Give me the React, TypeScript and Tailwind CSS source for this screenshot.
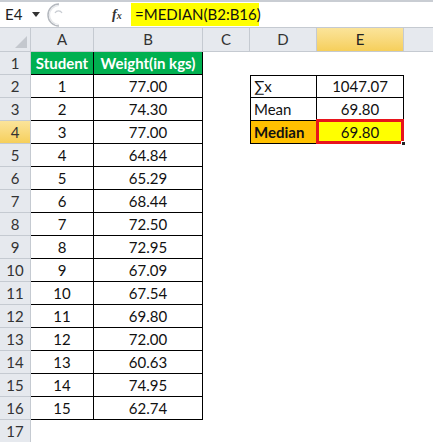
import React from "react";

const weights = ["77.00","74.30","77.00","64.84","65.29","68.44","72.50","72.95","67.09","67.54","69.80","72.00","60.63","74.95","62.74"];
const cols = ["A","B","C","D","E"];

function RowHeader({ n }: { n: number }) {
  const active = n === 4;
  return (
    <div className={`flex items-center justify-center border-b border-r border-[#c5cad1] text-[15px] text-[#333] ${active ? "bg-gradient-to-b from-[#fbe49a] to-[#f6cf5a]" : "bg-[#e6e9ee]"}`}>
      {n}
    </div>
  );
}

export default function App() {
  const rows: React.ReactNode[] = [];
  for (let r = 1; r <= 17; r++) {
    rows.push(<RowHeader key={`h${r}`} n={r} />);
    if (r === 1) {
      rows.push(<div key={`a${r}`} className="flex items-center justify-center bg-[#00b050] font-bold text-white border-r border-b border-black text-[15px]">Student</div>);
      rows.push(<div key={`b${r}`} className="flex items-center justify-center bg-[#00b050] font-bold text-white border-r border-b border-black text-[15px]">Weight(in kgs)</div>);
    } else if (r <= 16) {
      rows.push(<div key={`a${r}`} className="flex items-center justify-center border-r border-b border-black text-[15px] text-[#111]">{r - 1}</div>);
      rows.push(<div key={`b${r}`} className="flex items-center justify-center border-r border-b border-black text-[15px] text-[#111]">{weights[r - 2]}</div>);
    } else {
      rows.push(<div key={`a${r}`} />);
      rows.push(<div key={`b${r}`} />);
    }
    rows.push(<div key={`c${r}`} />);
    if (r === 2) {
      rows.push(<div key={`d${r}`} className="flex items-center pl-[3px] border border-black text-[15px] text-[#111]">∑x</div>);
      rows.push(<div key={`e${r}`} className="flex items-center justify-center border-t border-r border-b border-black text-[15px] text-[#111]">1047.07</div>);
    } else if (r === 3) {
      rows.push(<div key={`d${r}`} className="flex items-center pl-[3px] border-l border-r border-b border-black text-[15px] text-[#111]">Mean</div>);
      rows.push(<div key={`e${r}`} className="flex items-center justify-center border-r border-b border-black text-[15px] text-[#111]">69.80</div>);
    } else if (r === 4) {
      rows.push(<div key={`d${r}`} className="flex items-center pl-[3px] border-l border-r border-b border-black bg-[#ffc000] font-bold text-[15px] text-[#111]">Median</div>);
      rows.push(
        <div key={`e${r}`} className="relative flex items-center justify-center border-r border-b border-black bg-[#ffff00] text-[15px] text-[#111]">
          69.80
          <div className="absolute -left-[1px] -top-[2px] -right-[1px] -bottom-[1px] border-[3px] border-[#e8141c]" />
          <div className="absolute -right-[3px] -bottom-[3px] w-[5px] h-[5px] bg-[#222] border border-white" />
        </div>
      );
    } else {
      rows.push(<div key={`d${r}`} />);
      rows.push(<div key={`e${r}`} />);
    }
    rows.push(<div key={`f${r}`} />);
  }

  return (
    <div className="w-[433px] h-[442px] overflow-hidden bg-white" style={{ fontFamily: "Lato, 'Noto Sans', sans-serif" }}>
      <div className="h-[2px] bg-[#c9cdd3]" />
      <div className="h-[26px] flex items-center border-b border-[#c5cad1] bg-white">
        <div className="w-[30px] pl-[5px] text-[15px] text-[#222]">E4</div>
        <div className="w-[12px] flex items-center justify-center">
          <svg width="8" height="5" viewBox="0 0 8 5"><path d="M0 0 L8 0 L4 5 Z" fill="#333" /></svg>
        </div>
        <div className="ml-[3px] w-[20px] h-[24px] flex items-center">
          <svg width="20" height="24" viewBox="0 0 20 24">
            <path d="M14 1 A 11 11 0 0 0 14 23" fill="none" stroke="#b4b8be" strokeWidth="1.5" />
            <path d="M14 2.5 A 9.5 9.5 0 0 0 14 21.5" fill="none" stroke="#e4e6e9" strokeWidth="1.2" />
            <path d="M10 10 A 4 4 0 0 1 17 10" fill="none" stroke="#c8ccd2" strokeWidth="1.2" />
          </svg>
        </div>
        <div className="ml-[47px] w-[18px] text-[14px] italic font-bold text-[#333]" style={{ fontFamily: "'Liberation Serif', serif" }}>f<span className="text-[10px]">x</span></div>
        <div className="ml-[1px] h-[23px] w-[128px] bg-[#ffff00] flex items-center pl-[4px] text-[15px] text-[#111]">=MEDIAN(B2:B16)</div>
      </div>
      <div className="grid grid-cols-[31px_63px_109px_47px_67px_87px_1fr] grid-rows-[24px_repeat(17,23px)]">
        <div className="bg-[#e6e9ee] border-r border-b border-[#c5cad1] relative overflow-hidden">
          <svg className="absolute right-[3px] bottom-[3px]" width="12" height="12" viewBox="0 0 12 12"><path d="M12 0 L12 12 L0 12 Z" fill="#c4c8ce" /></svg>
        </div>
        {cols.map((c) => (
          <div
            key={c}
            className={`flex items-center justify-center border-r border-b border-[#c5cad1] text-[15px] ${c === "E" ? "bg-gradient-to-b from-[#fbe49a] to-[#f6cf5a] text-[#222]" : "bg-[#e6e9ee] text-[#333]"}`}
          >
            {c}
          </div>
        ))}
        <div className="bg-[#e6e9ee] border-b border-[#c5cad1]" />
        {rows}
      </div>
    </div>
  );
}
